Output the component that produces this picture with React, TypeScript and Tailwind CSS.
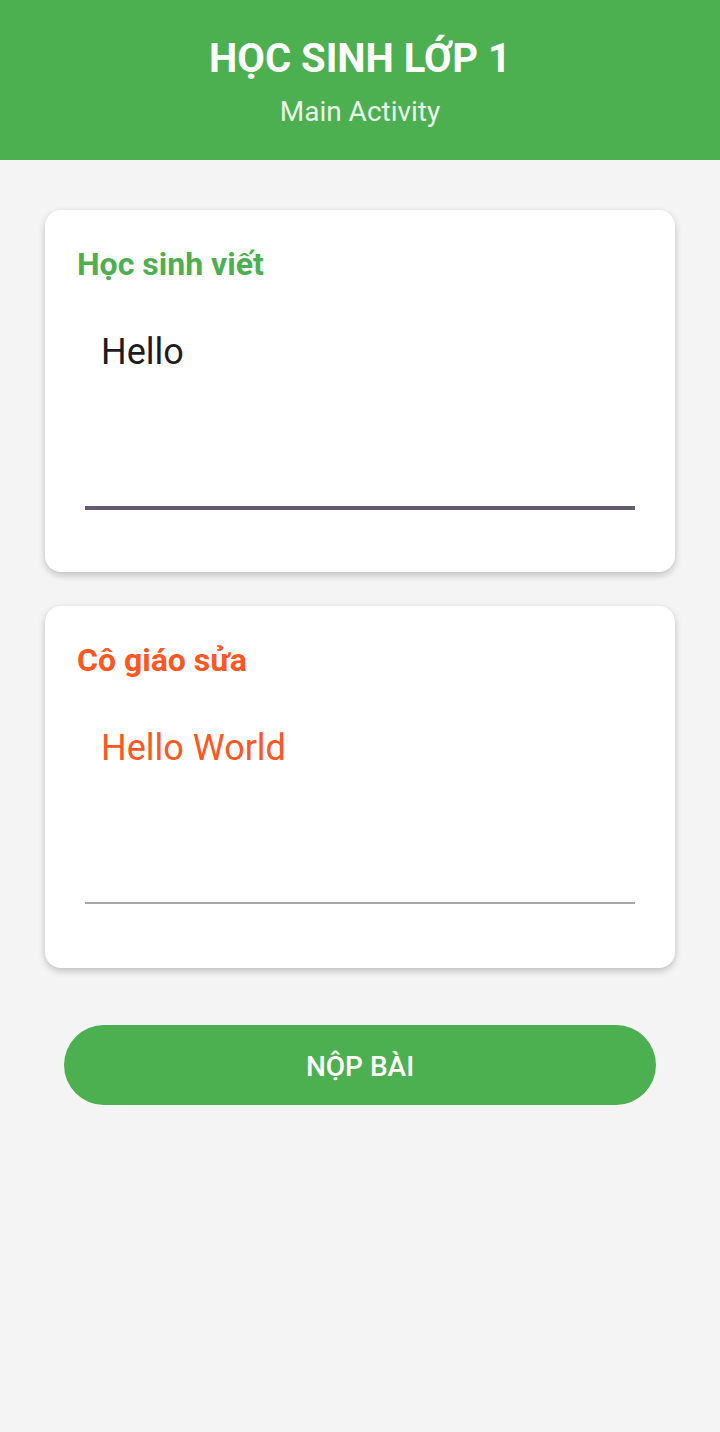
import React from "react";

const font = { fontFamily: "Roboto, 'Noto Sans', sans-serif" };

export default function App() {
  return (
    <div className="min-h-[1432px] w-[720px] bg-[#f4f4f4]" style={font}>
      <header className="flex h-[160px] flex-col items-center bg-[#4caf50] pt-[35px]">
        <h1 className="text-[40px] font-bold leading-[48px] text-white">HỌC SINH LỚP 1</h1>
        <p className="mt-[11px] text-[28px] leading-[36px] text-[#e8f5e9]">Main Activity</p>
      </header>

      <main className="flex flex-col px-[45px] pt-[50px]">
        <section className="rounded-[16px] bg-white px-[32px] pt-[34px] pb-[62px] shadow-[0_3px_7px_rgba(0,0,0,0.22)]">
          <h2 className="text-[32px] font-bold leading-[40px] text-[#4caf50]">Học sinh viết</h2>
          <div className="mx-[8px] mt-[46px] h-[180px] border-b-4 border-[#625b71] px-[16px]">
            <p className="text-[36px] leading-[44px] text-[#1c1b1f]">Hello</p>
          </div>
        </section>

        <section className="mt-[34px] rounded-[16px] bg-white px-[32px] pt-[34px] pb-[64px] shadow-[0_3px_7px_rgba(0,0,0,0.22)]">
          <h2 className="text-[32px] font-bold leading-[40px] text-[#ff5722]">Cô giáo sửa</h2>
          <div className="mx-[8px] mt-[46px] h-[178px] border-b-2 border-[#a6a6a6] px-[16px]">
            <p className="text-[36px] leading-[44px] text-[#ff5722]">Hello World</p>
          </div>
        </section>

        <div className="mt-[57px] px-[19px]">
          <button className="flex h-[80px] w-full items-center justify-center rounded-full bg-[#4caf50] pt-[3px] text-[28px] font-medium text-white">
            NỘP BÀI
          </button>
        </div>
      </main>
    </div>
  );
}
